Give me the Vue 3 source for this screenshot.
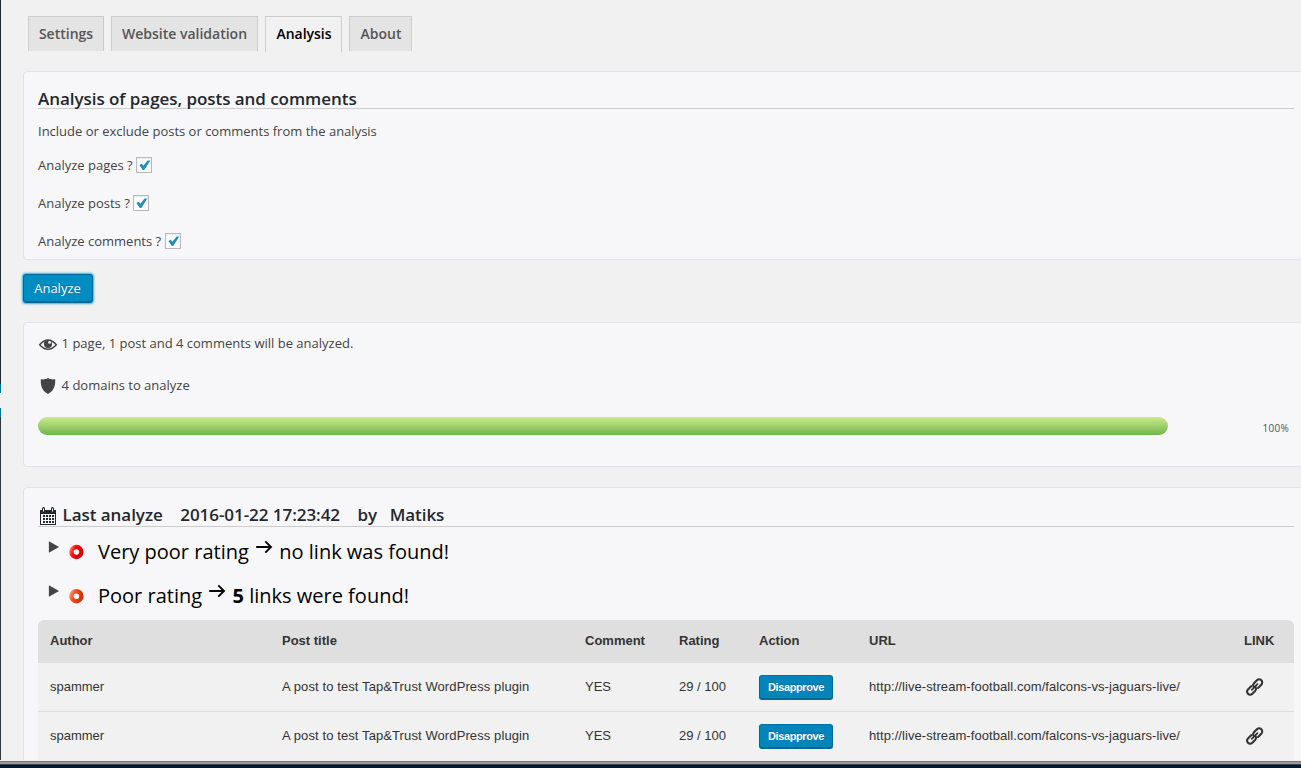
<script setup>
const tabs = [
  { label: 'Settings', cls: 't1' },
  { label: 'Website validation', cls: 't2' },
  { label: 'Analysis', cls: 't3 active' },
  { label: 'About', cls: 't4' },
]
const checks = ['Analyze pages ?', 'Analyze posts ?', 'Analyze comments ?']
const columns = ['Author', 'Post title', 'Comment', 'Rating', 'Action', 'URL', 'LINK']
const row = {
  author: 'spammer',
  title: 'A post to test Tap&Trust WordPress plugin',
  comment: 'YES',
  rating: '29 / 100',
  url: 'http://live-stream-football.com/falcons-vs-jaguars-live/',
}
const rows = [row, row]
</script>

<template>
  <div class="screen">
    <div class="body">
      <div class="rail"><i class="dark"></i><i class="blue"></i><i class="gap"></i><i class="blue"></i><i class="grey"></i></div>
      <main class="main">
        <nav class="tabs">
          <a v-for="t in tabs" :key="t.label" class="tab" :class="t.cls">{{ t.label }}</a>
        </nav>

        <section class="card options">
          <h3 class="heading">Analysis of pages, posts and comments</h3>
          <p class="intro">Include or exclude posts or comments from the analysis</p>
          <label v-for="c in checks" :key="c" class="check">
            <span>{{ c }}</span>
            <span class="box">
              <svg width="14" height="14" viewBox="0 0 14 14"><path d="M2.4 7 L4.8 5.8 L6.4 7.8 L10.6 2.4 L13.3 2.4 L7.2 12 L5.8 12 Z" fill="#1e8cbe" /></svg>
            </span>
          </label>
        </section>

        <button class="analyze">Analyze</button>

        <section class="card progress">
          <p class="info">
            <svg width="20" height="20" viewBox="0 0 20 20">
              <path d="M1.7 10.7 Q10 1.1 18.3 10.7 Q10 19.9 1.7 10.7Z" fill="none" stroke="#444" stroke-width="1.5" />
              <circle cx="10" cy="10.1" r="4" fill="#444" /><circle cx="11.6" cy="8.4" r="1.4" fill="#f7f7fa" />
            </svg>
            <span>1 page, 1 post and 4 comments will be analyzed.</span>
          </p>
          <p class="info second">
            <svg width="20" height="20" viewBox="0 0 20 20"><path d="M10 2 C12.3 3.4 14.6 3.6 17.2 3.3 C17.6 10.5 15.5 15.2 10 18 C4.5 15.2 2.4 10.5 2.8 3.3 C5.4 3.6 7.7 3.4 10 2Z" fill="#444" /></svg>
            <span>4 domains to analyze</span>
          </p>
          <div class="progress-row"><div class="bar"></div><span class="pct">100%</span></div>
        </section>

        <section class="card results">
          <h3 class="heading last">
            <svg width="20" height="20" viewBox="0 0 20 20">
              <path fill="#23282d" d="M2 4h2V2.6a1.5 1.5 0 0 1 3 0V4h6V2.6a1.5 1.5 0 0 1 3 0V4h2v15H2z" />
              <path fill="#f7f7fa" d="M5 2.6h1v2.8H5zM14 2.6h1v2.8h-1zM3 8h14v10H3z" />
              <path fill="#23282d" d="M5 9h2v2H5zM8 9h2v2H8zM11 9h2v2h-2zM14 9h2v2h-2zM5 12h2v2H5zM8 12h2v2H8zM11 12h2v2h-2zM14 12h2v2h-2zM5 15h2v2H5zM8 15h2v2H8zM11 15h2v2h-2zM14 15h2v2h-2z" />
            </svg>
            <span class="la">Last analyze</span><span class="date">2016-01-22 17:23:42</span><span class="by">by</span><span>Matiks</span>
          </h3>
          <div class="rating">
            <svg class="tri" width="11" height="12" viewBox="0 0 11 12"><path d="M.9 .3V11.7L11 6Z" fill="#444" /></svg>
            <svg class="ring" width="16" height="16" viewBox="0 0 16 16">
              <defs><linearGradient id="ring-red" x2="1" y2=".4"><stop stop-color="#f66" /><stop offset=".35" stop-color="#fa0d0d" /><stop offset="1" stop-color="#d00808" /></linearGradient></defs>
              <circle cx="8.4" cy="8" r="5" fill="none" stroke="url(#ring-red)" stroke-width="4.4" />
            </svg>
            <span class="label">Very poor rating</span>
            <svg class="arrow" width="20" height="20" viewBox="0 0 20 20"><path d="M2.2 10H16.5M11.3 4.3L17 10L11.3 15.7" fill="none" stroke="#000" stroke-width="1.9" /></svg>
            <span>no link was found!</span>
          </div>
          <div class="rating">
            <svg class="tri" width="11" height="12" viewBox="0 0 11 12"><path d="M.9 .3V11.7L11 6Z" fill="#444" /></svg>
            <svg class="ring" width="16" height="16" viewBox="0 0 16 16">
              <defs><linearGradient id="ring-orange" x2="1" y2=".4"><stop stop-color="#ff8a66" /><stop offset=".4" stop-color="#fa4a1c" /><stop offset="1" stop-color="#d93208" /></linearGradient></defs>
              <circle cx="8.4" cy="8.2" r="5" fill="none" stroke="url(#ring-orange)" stroke-width="4.4" />
            </svg>
            <span class="label">Poor rating</span>
            <svg class="arrow" width="20" height="20" viewBox="0 0 20 20"><path d="M2.2 10H16.5M11.3 4.3L17 10L11.3 15.7" fill="none" stroke="#000" stroke-width="1.9" /></svg>
            <span><b>5</b> links were found!</span>
          </div>
          <div class="table">
            <div class="tr head"><span v-for="c in columns" :key="c">{{ c }}</span></div>
            <div v-for="(r, i) in rows" :key="i" class="tr line">
              <span class="txt">{{ r.author }}</span><span class="txt wide">{{ r.title }}</span><span class="txt">{{ r.comment }}</span><span class="txt">{{ r.rating }}</span>
              <span><button class="dis">Disapprove</button></span>
              <span class="txt url">{{ r.url }}</span>
              <span class="link">
                <svg width="21" height="20" viewBox="0 0 21 20"><g fill="none" stroke="#333" stroke-width="2.1" stroke-linecap="round" transform="translate(.6 0) rotate(-45 10 10)"><path d="M8.2 7H3.6a3 3 0 0 0 0 6.2h4.2a3 3 0 0 0 2.8-2.2" /><path d="M11.8 13.1h4.6a3 3 0 0 0 0-6.2h-4.2a3 3 0 0 0-2.8 2.2" /><path d="M6 10.05h8" stroke-width="1.7" /></g></svg>
              </span>
            </div>
          </div>
        </section>
      </main>
    </div>
    <footer class="edge"></footer>
  </div>
</template>

<style>
body { margin: 0; background: #f1f1f1; overflow: hidden; }
</style>

<style scoped>
* { box-sizing: border-box; }
.screen { width: 1301px; height: 768px; overflow: hidden; display: flex; flex-direction: column; background: #f1f1f1; font-family: "Open Sans", sans-serif; font-size: 13px; color: #444; }
.body { height: 760px; display: flex; overflow: hidden; }
.rail { width: 1px; flex: none; display: flex; flex-direction: column; }
.dark { height: 384px; background: #23282d; }
.blue { height: 9px; background: #0073aa; }
.gap { height: 15px; }
.grey { flex: 1; background: #32373c; }
.main { width: 1300px; flex: none; padding: 16px 0 0 22px; }
.tabs { display: flex; height: 36px; margin-left: 5px; gap: 7px; }
.tab { height: 35px; border: 1px solid #ccc; border-bottom: 0; background: #e4e4e4; color: #555; font-size: 14px; font-weight: 600; line-height: 34px; text-align: center; white-space: nowrap; }
.t1 { width: 76px; } .t2 { width: 147px; } .t3 { width: 77px; padding-left: 1px; } .t4 { width: 63px; padding-left: 1px; }
.tab.active { height: 36px; background: #f1f1f1; color: #000; }
.card { width: 1290px; border: 1px solid #e1e1e8; border-radius: 4px; background: #f7f7fa; padding: 0 14px; }
.options { margin-top: 19px; height: 189px; }
.heading { margin: 17px 0 0; width: 1256px; height: 20px; border-bottom: 1px solid #ccc; font-size: 17px; line-height: 20px; font-weight: 600; letter-spacing: -.05px; color: #23282d; white-space: nowrap; }
.intro { margin: 12px 0 0; line-height: 20px; }
.check { display: flex; align-items: center; height: 20px; margin-top: 14px; gap: 3px; }
.check + .check { margin-top: 18px; }
.check:last-child { gap: 4px; }
.box { width: 16px; height: 16px; background: #fff; border: 1px solid #b4b9be; box-shadow: inset 0 1px 2px rgba(0,0,0,.1); display: flex; }
.analyze { display: block; margin: 14px 0 0 0; width: 70px; height: 29px; padding: 0 1px 1px 0; border: 1px solid #006799; border-radius: 3px; background: #008ec2; color: #fff; font: 13px/25px "Open Sans", sans-serif; text-shadow: 0 -1px 1px #006799; box-shadow: inset 0 -1px 0 #006799, 0 0 2px 1px #33b3db; }
.progress { margin-top: 19px; height: 145px; }
.info { margin: 11px 0 0; height: 20px; display: flex; align-items: center; gap: 4px; line-height: 20px; }
.info span { margin: -2px 0 0 -.4px; }
.info.second { margin-top: 22px; }
.progress-row { margin-top: 21px; height: 22px; display: flex; }
.bar { width: 1130px; height: 18px; border-radius: 9px; background: linear-gradient(#cdeb8e, #6fb54c); }
.pct { width: 121px; line-height: 23px; text-align: right; font-size: 10px; letter-spacing: .25px; color: #555; }
.results { margin-top: 20px; height: 321px; }
.heading.last { display: flex; align-items: flex-start; margin-top: 19px; line-height: 16px; }
.last svg { flex: none; margin-top: -1px; }
.la { margin: 0 17.5px 0 4.5px; } .date { margin-right: 17.5px; } .by { margin-right: 12.5px; }
.rating { display: flex; align-items: center; height: 44px; margin-top: 3px; font-size: 20px; line-height: 30px; color: #000; white-space: nowrap; }
.rating + .rating { margin-top: 0; }
.tri { margin: -10px 9px 0 10px; } .ring { margin-right: 14px; } .arrow { margin: -11px 5.5px 0 5px; }
.table { width: 1256px; margin-top: 2px; border-radius: 6px 6px 0 0; overflow: hidden; background: #f1f1f1; color: #333; font: 13px "Liberation Sans", Arial, sans-serif; }
.tr { display: grid; grid-template-columns: 232px 303px 94px 80px 110px 375px 50px; padding-left: 12px; align-items: center; white-space: nowrap; }
.head { height: 42px; padding-bottom: 2px; background: #dfdfdf; font-weight: 700; }
.line { height: 49px; border-top: 1px solid #ddd; }
.txt { margin-top: -2px; }
.wide { letter-spacing: .1px; }
.url { letter-spacing: .07px; }
.dis { display: block; width: 74px; height: 25px; margin-top: 1px; padding: 0; border: 1px solid #006799; border-color: #0073aa #006799 #006799; border-radius: 3px; background: #0085ba; color: #fff; font: bold 11px/21px "Liberation Sans", Arial, sans-serif; letter-spacing: -.38px; box-shadow: inset 0 -1px 0 #006799; text-shadow: 0 -1px 1px #006799; }
.link svg { display: block; }
.edge { height: 8px; background: linear-gradient(#f1f1f1 0 1px, #777 1px 2px, #999 2px 4px, #444 4px 5px, #001830 5px); }
</style>
